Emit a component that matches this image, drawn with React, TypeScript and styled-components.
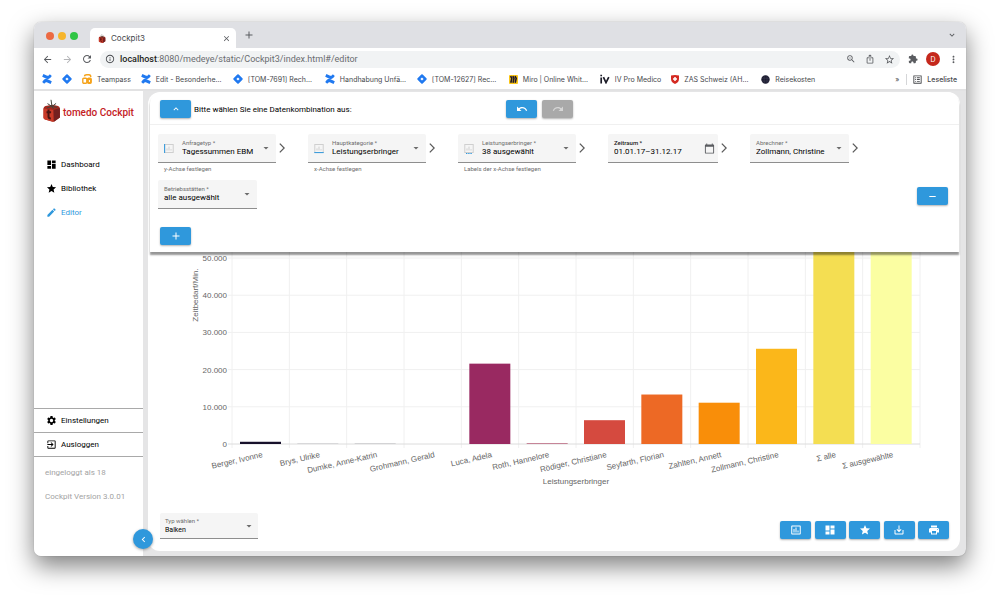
import React from "react";
import styled, { createGlobalStyle, css } from "styled-components";
import {
  MdAdd, MdArrowBack, MdArrowDropDown, MdArrowForward, MdCalendarToday, MdChevronLeft, MdClose,
  MdDashboard, MdEdit, MdExitToApp, MdExpandLess, MdExpandMore, MdExtension, MdInfoOutline,
  MdInsertChartOutlined, MdIosShare, MdListAlt, MdMoreVert, MdPrint, MdRedo, MdRefresh, MdRemove,
  MdSaveAlt, MdSettings, MdStar, MdStarBorder, MdUndo, MdZoomOut,
} from "react-icons/md";

const blue = "#2f98dc";

const GlobalStyle = createGlobalStyle`
  *, *::before, *::after { box-sizing: border-box; }
  body { margin: 0; background: #fff; font-family: Roboto, "Liberation Sans", sans-serif; color: #1c1c24; }
  button, input, select { font: inherit; color: inherit; margin: 0; }
  button { cursor: pointer; border: 0; padding: 0; background: none; }
  a { color: inherit; text-decoration: none; }
  svg { display: block; flex: none; }
`;

const Desktop = styled.div`
  min-height: 100vh;
  padding: 22px 34px 45px;
  display: flex;
`;

const BrowserWindow = styled.div`
  flex: 1;
  min-width: 0;
  display: flex;
  flex-direction: column;
  overflow: hidden;
  border-radius: 7px;
  background: #e5e5e6;
  box-shadow: 0 0 1px rgba(0, 0, 0, 0.35), 0 10px 24px rgba(0, 0, 0, 0.5);
`;

/* ---------- browser chrome ---------- */

const Chrome = styled.header`
  font-family: Inter, "Liberation Sans", sans-serif;
  color: #46484c;
  background: #fff;
  border-bottom: 2px solid #e2e2e3;
`;

const TabStrip = styled.div`
  display: flex;
  align-items: center;
  height: 26px;
  padding: 0 9px 0 12px;
  background: #dfe0e4;
`;

const Lights = styled.div`
  display: flex;
  gap: 4px;
  margin-top: 2px;
`;

const Light = styled.span<{ $color: string }>`
  width: 8px;
  height: 8px;
  border-radius: 50%;
  background: ${(p) => p.$color};
`;

const Tab = styled.div`
  display: flex;
  align-items: center;
  gap: 5px;
  align-self: flex-end;
  width: 146px;
  height: 20px;
  margin: 0 8px 0 12px;
  padding: 0 5px 0 8px;
  border-radius: 5px 5px 0 0;
  background: #fff;
  font-size: 8px;
`;

const TabTitle = styled.span`
  flex: 1;
`;

const Spacer = styled.span`
  flex: 1;
`;

const ChromeButton = styled.button<{ $dim?: boolean }>`
  display: flex;
  align-items: center;
  justify-content: center;
  width: 10px;
  height: 10px;
  color: ${(p) => (p.$dim ? "#b4b5b8" : "#5a5c60")};
`;

const Toolbar = styled.div`
  display: flex;
  align-items: center;
  gap: 8px;
  height: 22px;
  padding: 0 8px;
`;

const ToolGroup = styled.div<{ $gap: number }>`
  display: flex;
  align-items: center;
  gap: ${(p) => p.$gap}px;
`;

const AddressBar = styled.div`
  flex: 1;
  display: flex;
  align-items: center;
  gap: 5px;
  height: 17px;
  padding: 0 6px 0 5px;
  border-radius: 9px;
  background: #f1f3f4;
`;

const Address = styled.span`
  flex: 1;
  font-family: Roboto, "Liberation Sans", sans-serif;
  font-size: 9px;
  color: #6a6c70;
  b { font-weight: 500; color: #1e1f22; }
`;

const Avatar = styled.button`
  width: 14px;
  height: 14px;
  border-radius: 50%;
  background: #c5281c;
  color: #fff;
  font-size: 7px;
`;

const Bookmarks = styled.nav`
  display: flex;
  align-items: center;
  gap: 10px;
  height: 19px;
  padding: 0 9px 1px 8px;
  font-size: 7px;
  white-space: nowrap;
`;

const Bookmark = styled.a<{ $wide?: boolean }>`
  display: flex;
  align-items: center;
  gap: 5px;
  span { ${(p) => p.$wide && css`width: 67px;`} }
`;

const ReadingList = styled.a`
  display: flex;
  align-items: center;
  gap: 4px;
  padding-left: 5px;
  border-left: 1px solid #d5d6d8;
  font-weight: 500;
`;

/* ---------- page ---------- */

const Page = styled.div`
  flex: 1;
  display: flex;
`;

const Sidebar = styled.aside`
  position: relative;
  display: flex;
  flex-direction: column;
  width: 109px;
  background: #fff;
`;

const Brand = styled.a`
  display: flex;
  align-items: center;
  gap: 2px;
  padding: 8px 0 0 8px;
  color: #c4221f;
  font-size: 10px;
  font-weight: 500;
  white-space: nowrap;
  span { padding-top: 4px; }
`;

const Menu = styled.nav`
  display: flex;
  flex-direction: column;
  padding-top: 30px;
`;

const MenuLink = styled.a<{ $active?: boolean; $ruled?: boolean }>`
  display: flex;
  align-items: center;
  gap: 4px;
  height: 24px;
  padding-left: 12px;
  font-size: 8px;
  color: ${(p) => (p.$active ? blue : "#000")};
  ${(p) => p.$ruled && css`border-top: 1px solid #a9a9a9;`}
`;

const SidebarFooter = styled.div`
  margin-top: auto;
  padding-bottom: 47px;
`;

const Status = styled.div`
  border-top: 1px solid #a9a9a9;
  padding: 4px 0 0 11px;
  font-size: 8px;
  line-height: 24px;
  color: #a3a3a3;
  p { margin: 0; }
`;

const CollapseButton = styled.button`
  position: absolute;
  z-index: 2;
  right: -10px;
  bottom: 7px;
  display: flex;
  align-items: center;
  justify-content: center;
  width: 20px;
  height: 20px;
  border-radius: 50%;
  background: ${blue};
  color: #fff;
  box-shadow: 0 1px 3px rgba(0, 0, 0, 0.35);
`;

const Card = styled.main`
  flex: 1;
  min-width: 0;
  display: flex;
  flex-direction: column;
  margin: 1px 6px 5px 5px;
  border-radius: 12px;
  background: #fff;
`;

const FilterPanel = styled.section`
  position: relative;
  z-index: 1;
  margin: 0 1px 0 2px;
  border-radius: 12px 12px 0 0;
  background: #fff;
  box-shadow: 0 3px 2px rgba(0, 0, 0, 0.42);
`;

const PanelHeader = styled.div`
  display: grid;
  grid-template-columns: 44% auto;
  align-items: center;
  height: 33px;
  padding: 2px 12px 0 10px;
  border-bottom: 1px solid #f0f0f0;
`;

const Group = styled.div`
  display: flex;
  align-items: center;
  gap: 3px;
`;

const History = styled(Group)`
  gap: 5px;
`;

const PanelTitle = styled.h1`
  margin: 0;
  font-size: 8px;
  font-weight: 400;
  color: #000;
`;

const ActionButton = styled.button`
  display: flex;
  align-items: center;
  justify-content: center;
  width: 31px;
  height: 18px;
  border-radius: 2px;
  background: ${blue};
  color: #fff;
  box-shadow: 0 1px 2px rgba(0, 0, 0, 0.3);
  &:disabled { background: #a9a9a9; color: #d6d6d6; }
`;

const Filters = styled.div`
  display: flex;
  flex-wrap: wrap;
  padding: 9px 11px 0 8px;
`;

const Step = styled.div`
  display: flex;
  height: 46px;
`;

const StepArrow = styled.span`
  display: flex;
  align-items: center;
  width: 32px;
  height: 28px;
  padding-left: 3px;
`;

const RemoveSlot = styled.div`
  margin-left: auto;
  padding-top: 7px;
`;

const AddSlot = styled.div`
  padding: 1px 10px 7px;
`;

const FieldBox = styled.div<{ $width: number; $compact?: boolean }>`
  display: flex;
  align-items: center;
  gap: 8px;
  width: ${(p) => p.$width}px;
  height: ${(p) => (p.$compact ? 26 : 29)}px;
  padding: ${(p) => (p.$compact ? "0 3px 0 5px" : "0 4px 0 6px")};
  border-bottom: 1px solid #8e8e8e;
  border-radius: 2px 2px 0 0;
  background: #f5f5f5;
`;

const FieldText = styled.div`
  flex: 1;
  min-width: 0;
  display: flex;
  flex-direction: column;
`;

const FieldLabel = styled.label<{ $strong?: boolean }>`
  font-size: 6px;
  line-height: 8px;
  color: ${(p) => (p.$strong ? "#1c1c24" : "#6d6d6d")};
  font-weight: ${(p) => (p.$strong ? 500 : 400)};
`;

const control = css`
  width: 100%;
  height: 10px;
  padding: 0;
  border: 0;
  outline: 0;
  background: transparent;
  font-size: 8px;
  line-height: 10px;
  color: #000;
`;

const Select = styled.select<{ $small?: boolean }>`
  ${control}
  appearance: none;
  ${(p) => p.$small && css`font-size: 7px;`}
`;

const DateInput = styled.input`
  ${control}
`;

const Marker = styled.span`
  color: #6b6b6b;
  margin-left: -8px;
`;

const Hint = styled.p`
  margin: 0;
  padding: 2px 6px 0;
  font-size: 6px;
  line-height: 8px;
  color: #6d6d6d;
`;

const Chart = styled.svg`
  width: 100%;
  height: auto;
  font-family: "Liberation Sans", Arial, sans-serif;
  font-size: 8px;
  fill: #666;
`;

const CardFooter = styled.footer`
  display: flex;
  align-items: flex-end;
  justify-content: space-between;
  margin-top: auto;
  padding: 0 11px 12px 12px;
`;

const Actions = styled.div`
  display: flex;
  justify-content: space-between;
  width: 169px;
`;

/* ---------- drawings ---------- */

const Tomato = ({ w, h }: { w: number; h: number }) => (
  <svg width={w} height={h} viewBox="0 0 18 23">
    <path d="M1 9.5Q1 7.500 3 7L10 5.800 15.500 7Q17.400 7.600 17.400 10V18.500L12 22.400Q10.600 23 9 22.600L2.500 20.600Q1 20 1 18.500z" fill="#a3271d" />
    <path d="M1 9.500L11 11V22.800L2.500 20.600Q1 20 1 18.500z" fill="#c93a28" />
    <path d="M11 11L17.400 9V18.500L11.500 22.600z" fill="#742020" />
    <path d="M6 10.500v7q0 2 2.400 2M4 13.200h4.600" stroke="#4a1512" strokeWidth="2" fill="none" />
    <path d="M9.500 7.500L8.500.800M9.500 7.500L5 4.600M9.500 7.500L13.600 4.400M9.500 7.500L4.600 8.800M9.500 7.500L14.600 8.400M9.500 7.500L11 10" stroke="#45453c" strokeWidth="1" fill="none" />
  </svg>
);

const Confluence = () => (
  <svg width="10" height="10" viewBox="0 0 10 10" fill="#2079f0">
    <path d="M.2 8Q2.600 3.800 5.600 5.200L9.800 7.200 8.600 10 4.800 8.300Q3.300 7.700 2.200 9.800z" />
    <path d="M9.800 2Q7.400 6.200 4.400 4.800L.2 2.800 1.400 0 5.200 1.700Q6.700 2.300 7.800.2z" />
  </svg>
);

const Jira = () => (
  <svg width="10" height="10" viewBox="0 0 10 10">
    <path d="M4.300.6Q5-.1 5.700.6L9.400 4.300Q10.100 5 9.400 5.700L5.700 9.400Q5 10.100 4.300 9.400L.6 5.700Q-.1 5 .6 4.300z" fill="#2079f0" />
    <path d="M5 3.400L6.600 5 5 6.600 3.400 5z" fill="#fff" />
  </svg>
);

const Teampass = () => (
  <svg width="10" height="10" viewBox="0 0 10 10" fill="none" stroke="#f5a31c" strokeWidth="1.400">
    <path d="M2.500 2.400Q2.600.7 5 .8H7Q8.800.8 8.800 3" />
    <rect x=".8" y="4.200" width="4" height="5" rx="1" />
    <rect x="5.600" y="4.200" width="3.600" height="5" rx="1" fill="#f5a31c" />
    <path d="M7.400 6v2" stroke="#fff" strokeWidth="1" />
  </svg>
);

const Miro = () => (
  <svg width="9" height="9" viewBox="0 0 9 9">
    <rect width="9" height="9" rx="1" fill="#fbc616" />
    <path d="M1.600 1.200l1.200 2.200-1 4.400M3.800 1.200l1.200 2.200-1 4.400M6 1.200l1.200 2.200-1 4.400" stroke="#1b1730" strokeWidth="1.600" fill="none" />
  </svg>
);

const IvLogo = () => (
  <svg width="10" height="10" viewBox="0 0 10 10" fill="none" stroke="#1c1c28" strokeWidth="1.700">
    <path d="M1.200 3.400v6M1.200.8v1.500M3.400 3.200l2.600 5.400 2.800-5.400" />
  </svg>
);

const Shield = () => (
  <svg width="8" height="9" viewBox="0 0 8 9">
    <path d="M0 .6Q4-.6 8 .6V4Q8 7.400 4 9 0 7.400 0 4z" fill="#d42a22" />
    <path d="M4 2v4M2 4h4" stroke="#fff" strokeWidth="1.500" />
  </svg>
);

const Globe = () => (
  <svg width="9" height="9" viewBox="0 0 9 9">
    <circle cx="4.500" cy="4.500" r="4.200" fill="#1c1c30" />
    <path d="M1 3.200h7M1 6h7M3.200 1v7M6 1v7" stroke="#4a4a60" strokeWidth=".4" />
  </svg>
);

type AxisKind = "y" | "x" | "labels";

const AxisIcon = ({ kind }: { kind: AxisKind }) => (
  <svg width="10" height="11" viewBox="0 0 10 11" fill="none" strokeWidth="1">
    <rect x=".8" y="1.500" width="8.400" height="8" stroke="#cfcfcf" />
    <path d="M3 7.500V5.400M5 7.500V3.600M7 7.500V6.200" stroke="#cfcfcf" />
    {kind === "y" && <path d="M.6 1v9" stroke={blue} />}
    {kind === "x" && <path d="M.3 9.600h9.400" stroke={blue} />}
    {kind === "labels" && <path d="M2 10.500h6" stroke={blue} strokeDasharray="1.400 .8" />}
  </svg>
);

const NextArrow = () => (
  <svg width="6" height="10" viewBox="0 0 6 10" fill="none" stroke="#5a5a5a" strokeWidth="1.300">
    <path d="M.8.6 5.200 5 .8 9.400" />
  </svg>
);

/* ---------- fields ---------- */

type SelectFieldProps = {
  id: string;
  label: string;
  value: string;
  width: number;
  icon?: AxisKind;
  hint?: string;
  compact?: boolean;
};

const SelectField = ({ id, label, value, width, icon, hint, compact }: SelectFieldProps) => (
  <div>
    <FieldBox $width={width} $compact={compact}>
      {icon && <AxisIcon kind={icon} />}
      <FieldText>
        <FieldLabel htmlFor={id}>{label}</FieldLabel>
        <Select id={id} defaultValue={value} $small={compact}>
          <option>{value}</option>
        </Select>
      </FieldText>
      <Marker><MdArrowDropDown size={12} /></Marker>
    </FieldBox>
    {hint && <Hint>{hint}</Hint>}
  </div>
);

/* ---------- chart ---------- */

const series = [
  { name: "Berger, Ivonne", value: 600, color: "#17102b" },
  { name: "Brys, Ulrike", value: 60, color: "#8d8d95" },
  { name: "Dumke, Anne-Katrin", value: 60, color: "#77777f" },
  { name: "Grohmann, Gerald", value: 0, color: "#641a6b" },
  { name: "Luca, Adela", value: 21600, color: "#992961" },
  { name: "Roth, Hannelore", value: 200, color: "#b8607a" },
  { name: "Rödiger, Christiane", value: 6400, color: "#d54a3f" },
  { name: "Seyfarth, Florian", value: 13300, color: "#ed6925" },
  { name: "Zahlten, Annett", value: 11100, color: "#f98e09" },
  { name: "Zollmann, Christine", value: 25600, color: "#fbb71a" },
  { name: "Σ alle", value: 52000, color: "#f4de52" },
  { name: "Σ ausgewählte", value: 52000, color: "#fbfea2" },
];

const plot = { left: 84, right: 772, base: 192, unit: 186 / 50000 };
const slot = (plot.right - plot.left) / series.length;

const BarChart = () => (
  <Chart viewBox="0 0 812 240" role="img" aria-label="Zeitbedarf/Min. je Leistungserbringer">
    {Array.from({ length: series.length + 1 }, (_, i) => (
      <line key={i} x1={plot.left + i * slot} x2={plot.left + i * slot} y1="0" y2={plot.base + 4} stroke="#f0f0f0" />
    ))}
    {[0, 10, 20, 30, 40, 50].map((k) => {
      const y = plot.base - k * 1000 * plot.unit;
      return (
        <g key={k}>
          <line x1={plot.left - 4} x2={plot.right} y1={y} y2={y} stroke={k ? "#f0f0f0" : "#dcdcdc"} />
          <text x={plot.left - 5} y={y + 3} textAnchor="end">{k ? `${k}.000` : "0"}</text>
        </g>
      );
    })}
    {series.map((s, i) => {
      const x = plot.left + i * slot;
      const h = s.value * plot.unit;
      return (
        <g key={s.name}>
          <rect x={x + 8} y={plot.base - h} width="41" height={h} fill={s.color} />
          <text textAnchor="end" transform={`translate(${x + 31} ${plot.base + 13}) rotate(-13)`}>{s.name}</text>
        </g>
      );
    })}
    <text x={(plot.left + plot.right) / 2} y="232" textAnchor="middle">Leistungserbringer</text>
    <text textAnchor="middle" transform="translate(50 43) rotate(-90)">Zeitbedarf/Min.</text>
  </Chart>
);

const bookmarks = [
  { label: "", icon: <Confluence />, name: "Confluence" },
  { label: "", icon: <Jira />, name: "Jira" },
  { label: "Teampass", icon: <Teampass /> },
  { label: "Edit - Besonderhe...", icon: <Confluence />, wide: true },
  { label: "[TOM-7691] Rech...", icon: <Jira />, wide: true },
  { label: "Handhabung Unfä...", icon: <Confluence />, wide: true },
  { label: "[TOM-12627] Rec...", icon: <Jira />, wide: true },
  { label: "Miro | Online Whit...", icon: <Miro />, wide: true },
  { label: "IV Pro Medico", icon: <IvLogo /> },
  { label: "ZAS Schweiz (AH...", icon: <Shield />, wide: true },
  { label: "Reisekosten", icon: <Globe /> },
];

export default function App() {
  return (
    <Desktop>
      <GlobalStyle />
      <BrowserWindow>
        <Chrome>
          <TabStrip>
            <Lights>
              <Light $color="#ec6a43" />
              <Light $color="#f6b52c" />
              <Light $color="#2fc544" />
            </Lights>
            <Tab>
              <Tomato w={8} h={9} />
              <TabTitle>Cockpit3</TabTitle>
              <ChromeButton aria-label="Tab schließen"><MdClose size={9} /></ChromeButton>
            </Tab>
            <ChromeButton aria-label="Neuer Tab"><MdAdd size={12} /></ChromeButton>
            <Spacer />
            <ChromeButton aria-label="Tabs suchen"><MdExpandMore size={10} /></ChromeButton>
          </TabStrip>
          <Toolbar>
            <ToolGroup $gap={10}>
              <ChromeButton aria-label="Zurück"><MdArrowBack size={11} /></ChromeButton>
              <ChromeButton aria-label="Vor" $dim><MdArrowForward size={11} /></ChromeButton>
              <ChromeButton aria-label="Neu laden"><MdRefresh size={12} /></ChromeButton>
            </ToolGroup>
            <AddressBar>
              <MdInfoOutline size={10} />
              <Address><b>localhost</b>:8080/medeye/static/Cockpit3/index.html#/editor</Address>
              <ToolGroup $gap={9}>
                <ChromeButton aria-label="Zoom"><MdZoomOut size={10} /></ChromeButton>
                <ChromeButton aria-label="Teilen"><MdIosShare size={10} /></ChromeButton>
                <ChromeButton aria-label="Lesezeichen"><MdStarBorder size={11} /></ChromeButton>
              </ToolGroup>
            </AddressBar>
            <ChromeButton aria-label="Erweiterungen"><MdExtension size={10} /></ChromeButton>
            <Avatar>D</Avatar>
            <ChromeButton aria-label="Menü"><MdMoreVert size={11} /></ChromeButton>
          </Toolbar>
          <Bookmarks>
            {bookmarks.map((b, i) => (
              <Bookmark key={i} href="#" $wide={b.wide} aria-label={b.name}>
                {b.icon}
                {b.label && <span>{b.label}</span>}
              </Bookmark>
            ))}
            <Spacer />
            <ToolGroup $gap={7}>
              <span>»</span>
              <ReadingList href="#"><MdListAlt size={11} />Leseliste</ReadingList>
            </ToolGroup>
          </Bookmarks>
        </Chrome>

        <Page>
          <Sidebar>
            <Brand href="#"><Tomato w={19} h={23} /><span>tomedo Cockpit</span></Brand>
            <Menu>
              <MenuLink href="#"><MdDashboard size={11} />Dashboard</MenuLink>
              <MenuLink href="#"><MdStar size={11} />Bibliothek</MenuLink>
              <MenuLink href="#" $active><MdEdit size={11} />Editor</MenuLink>
            </Menu>
            <SidebarFooter>
              <MenuLink href="#" $ruled><MdSettings size={11} />Einstellungen</MenuLink>
              <MenuLink href="#" $ruled><MdExitToApp size={11} />Ausloggen</MenuLink>
              <Status>
                <p>eingeloggt als 18</p>
                <p>Cockpit Version 3.0.01</p>
              </Status>
            </SidebarFooter>
            <CollapseButton aria-label="Menü einklappen"><MdChevronLeft size={11} /></CollapseButton>
          </Sidebar>

          <Card>
            <FilterPanel>
              <PanelHeader>
                <Group>
                  <ActionButton aria-label="Einklappen"><MdExpandLess size={10} /></ActionButton>
                  <PanelTitle>Bitte wählen Sie eine Datenkombination aus:</PanelTitle>
                </Group>
                <History>
                  <ActionButton aria-label="Rückgängig"><MdUndo size={12} /></ActionButton>
                  <ActionButton aria-label="Wiederholen" disabled><MdRedo size={12} /></ActionButton>
                </History>
              </PanelHeader>
              <Filters>
                <Step>
                  <SelectField id="typ" label="Anfragetyp *" value="Tagessummen EBM" width={118} icon="y" hint="y-Achse festlegen" />
                  <StepArrow><NextArrow /></StepArrow>
                </Step>
                <Step>
                  <SelectField id="kategorie" label="Hauptkategorie *" value="Leistungserbringer" width={118} icon="x" hint="x-Achse festlegen" />
                  <StepArrow><NextArrow /></StepArrow>
                </Step>
                <Step>
                  <SelectField id="leistung" label="Leistungserbringer *" value="38 ausgewählt" width={118} icon="labels" hint="Labels der x-Achse festlegen" />
                  <StepArrow><NextArrow /></StepArrow>
                </Step>
                <Step>
                  <FieldBox $width={110}>
                    <FieldText>
                      <FieldLabel htmlFor="zeitraum" $strong>Zeitraum *</FieldLabel>
                      <DateInput id="zeitraum" defaultValue="01.01.17–31.12.17" />
                    </FieldText>
                    <ChromeButton aria-label="Kalender"><MdCalendarToday size={11} /></ChromeButton>
                  </FieldBox>
                  <StepArrow><NextArrow /></StepArrow>
                </Step>
                <Step>
                  <SelectField id="abrechner" label="Abrechner *" value="Zollmann, Christine" width={99} />
                  <StepArrow><NextArrow /></StepArrow>
                </Step>
                <Step>
                  <SelectField id="betrieb" label="Betriebsstätten *" value="alle ausgewählt" width={99} />
                </Step>
                <RemoveSlot>
                  <ActionButton aria-label="Entfernen"><MdRemove size={11} /></ActionButton>
                </RemoveSlot>
              </Filters>
              <AddSlot>
                <ActionButton aria-label="Hinzufügen"><MdAdd size={12} /></ActionButton>
              </AddSlot>
            </FilterPanel>

            <BarChart />

            <CardFooter>
              <SelectField id="diagramm" label="Typ wählen *" value="Balken" width={98} compact />
              <Actions>
                <ActionButton aria-label="Diagramm"><MdInsertChartOutlined size={12} /></ActionButton>
                <ActionButton aria-label="Dashboard"><MdDashboard size={12} /></ActionButton>
                <ActionButton aria-label="Favorit"><MdStar size={12} /></ActionButton>
                <ActionButton aria-label="Speichern"><MdSaveAlt size={12} /></ActionButton>
                <ActionButton aria-label="Drucken"><MdPrint size={12} /></ActionButton>
              </Actions>
            </CardFooter>
          </Card>
        </Page>
      </BrowserWindow>
    </Desktop>
  );
}
